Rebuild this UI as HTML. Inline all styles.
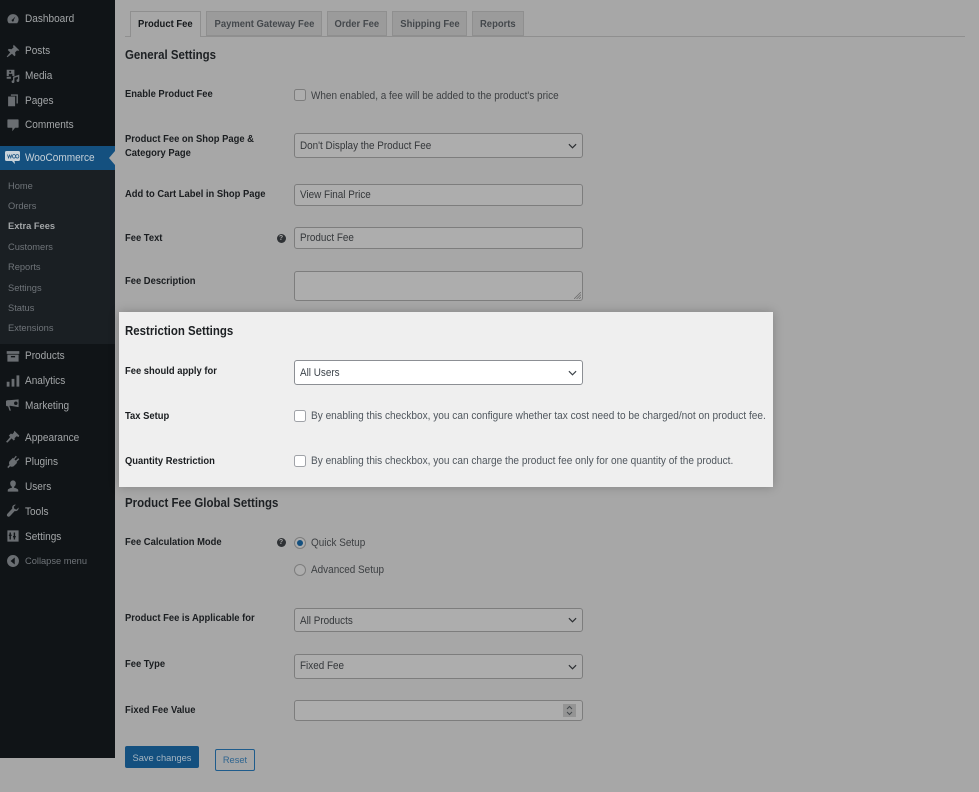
<!DOCTYPE html>
<html><head><meta charset="utf-8"><title>Product Fee</title>
<style>
html,body{margin:0;padding:0;background:#a7a7a7}
body{width:979px;height:792px;overflow:hidden;position:relative;font-family:"Liberation Sans",sans-serif;color:#1a1d20}
#w{position:absolute;left:0;top:0;width:979px;height:792px;background:#a7a7a7;filter:blur(.35px)}
.a{position:absolute;white-space:nowrap}
.side{position:absolute;left:0;top:0;width:115px;height:758px;background:#101417}
.sub{position:absolute;left:0;top:170px;width:115px;height:174px;background:#1a1f23}
.woo{position:absolute;left:0;top:146px;width:115px;height:24px;background:#14507f}
.m{position:absolute;left:25px;font-size:11.3px;line-height:14px;color:#a3a6a8;white-space:nowrap;transform:scaleX(.89);transform-origin:0 0}
.s{position:absolute;left:8px;font-size:9.3px;line-height:12px;color:#6f7479;white-space:nowrap}
.i{position:absolute;left:6px;width:14px;height:14px;fill:#6a6e72}
.t{position:absolute;top:11px;height:25px;box-sizing:border-box;border:1px solid #8f8f8f;background:#9b9b9b;font-size:10.5px;font-weight:bold;line-height:24px;text-align:center;color:#44484c;white-space:nowrap}
.t span{display:inline-block;transform:scaleX(.9);transform-origin:50% 50%}
.l{position:absolute;left:125px;font-size:10.5px;font-weight:bold;line-height:13.5px;white-space:nowrap;color:#1a1d20;transform:scaleX(.895);transform-origin:0 0}
.h{position:absolute;left:125px;font-size:12.8px;font-weight:bold;line-height:16px;white-space:nowrap;color:#1d2023;transform:scaleX(.895);transform-origin:0 0}
.f{position:absolute;left:294px;width:289px;box-sizing:border-box;border:1px solid #7d7d7d;border-radius:3px;background:#adadad;font-size:11px;line-height:21px;padding-left:5px;color:#34373a;white-space:nowrap}
.f span{display:inline-block;transform:scaleX(.9);transform-origin:0 50%}
.f svg{position:absolute;right:5px;top:50%;margin-top:-3px}
.c{position:absolute;left:294px;width:12px;height:12px;box-sizing:border-box;border:1px solid #7d7d7d;border-radius:2.5px;background:#adadad}
.d{position:absolute;left:311px;font-size:11px;line-height:14px;color:#3c3f42;white-space:nowrap;transform:scaleX(.905);transform-origin:0 0}
.q{position:absolute;left:276.5px;width:9px;height:9px;border-radius:50%;background:#2f3235;color:#a7a7a7;font-size:7px;font-weight:bold;line-height:9px;text-align:center}
.panel{position:absolute;left:119px;top:312px;width:654px;height:175px;background:#efefef;box-shadow:0 0 10px rgba(0,0,0,.22)}
</style></head><body><div id="w">

<div class="side"></div>
<div class="sub"></div>
<div class="woo"></div>
<svg class="a" style="left:109px;top:151px" width="6" height="14"><path d="M6 0L0 7l6 7z" fill="#a7a7a7"/></svg>

<svg class="i" style="top:12px" viewBox="0 0 20 20"><path d="M10 3a8 8 0 0 0-8 8c0 2 .7 3.700 2 5h12a8 8 0 0 0 2-5 8 8 0 0 0-8-8zm3.500 3.500L11 11.500a1.500 1.500 0 1 1-1.500-.9z" fill-rule="evenodd"/></svg>
<svg class="i" style="top:44px" viewBox="0 0 20 20"><path d="M11 1l8 8-2 1-1-1-3 3 .5 4-1.500 1.500-3.500-3.500L2 19l-1-1 5-6-3.500-3.500L4 7l4 .5 3-3-1-1z"/></svg>
<svg class="i" style="top:69px" viewBox="0 0 20 20"><path d="M1 1h11v9H9V7H4v3H1zm5 1.500a1.500 1.500 0 1 0 0 3 1.500 1.500 0 0 0 0-3zM1 11h6v3H1zM10 11l9-3v8.500a2 2 0 1 1-2-2V11l-5 1.500V18a2 2 0 1 1-2-2z" fill-rule="evenodd"/></svg>
<svg class="i" style="top:93px" viewBox="0 0 20 20"><path d="M7 2h10v13h-2V4H7zM3 5h10v14H3z"/></svg>
<svg class="i" style="top:118px" viewBox="0 0 20 20"><path d="M3 2h14a1 1 0 0 1 1 1v10a1 1 0 0 1-1 1h-4l-4 5v-5H3a1 1 0 0 1-1-1V3a1 1 0 0 1 1-1z"/></svg>
<svg class="a" style="left:5px;top:151px" width="15" height="13" viewBox="0 0 15 13"><path d="M1.500 0h12A1.500 1.500 0 0 1 15 1.500v7a1.500 1.500 0 0 1-1.500 1.500H9.500l.5 3-3-3H1.500A1.500 1.500 0 0 1 0 8.500v-7A1.500 1.500 0 0 1 1.500 0z" fill="#c9d3da"/><path d="M2.500 3.500l1 3.500 1.200-3 1.100 3 1-3.500M9 3.500a1.600 1.800 0 1 0 .01 0M12.300 3.500a1.600 1.800 0 1 0 .01 0" fill="none" stroke="#14507f" stroke-width=".7"/></svg>
<svg class="i" style="top:349px" viewBox="0 0 20 20"><path d="M1 3h18v4H1zM2 8h16v10H2zm5 2v2h6v-2z" fill-rule="evenodd"/></svg>
<svg class="i" style="top:374px" viewBox="0 0 20 20"><path d="M1 11h4v7H1zM8 7h4v11H8zM15 2h4v16h-4z"/></svg>
<svg class="i" style="top:398px" viewBox="0 0 20 20"><path d="M18 2v11L6 11H5v1l2 6H5l-2-6a4.500 4.500 0 0 1 0-9h3zM14 5a2.500 2.500 0 0 0 0 5 2.500 2.500 0 0 0 0-5z" fill-rule="evenodd"/></svg>
<svg class="i" style="top:430px" viewBox="0 0 20 20"><path d="M12 1l7 7-1 2-3-1-3 3 1 1-2 2-3-3-6 6-2-1 6-7-2-2 3-3 2 1 2-2z"/></svg>
<svg class="i" style="top:455px" viewBox="0 0 20 20"><path d="M14 1l1.500 1.500L12 6l2 2 3.500-3.500L19 6l-4 4 1 1-5 5c-2 1-4 1-5 0l-3 3-1-2 3-3c-1-1-1-3 0-5l5-5 1 1z"/></svg>
<svg class="i" style="top:479px" viewBox="0 0 20 20"><path d="M10 2a4 4 0 0 1 4 4.500c0 2-1 4-2.500 4.500v1.500c3 .5 6 2 6 3.500v2H2.500v-2c0-1.500 3-3 6-3.500V11C7 10.500 6 8.500 6 6.500A4 4 0 0 1 10 2z"/></svg>
<svg class="i" style="top:504px" viewBox="0 0 20 20"><path d="M18 5l-3 3-3-1-1-3 3-3c-3-.5-6 2-5 5.500L2 14c-1.500 1.500-.5 4 1 4 1 .5 2 0 3-1l6.500-7c3 1 6-2 5.500-5z"/></svg>
<svg class="i" style="top:529px" viewBox="0 0 20 20"><path d="M2 2h16v16H2zm3 3v3H4v2h1v5h2v-5h1V8H7V5zm6 0v5h-1v2h1v3h2v-3h1v-2h-1V5z" fill-rule="evenodd"/></svg>
<svg class="i" style="top:554px" viewBox="0 0 20 20"><path d="M10 1.500a8.500 8.500 0 1 0 0 17 8.500 8.500 0 0 0 0-17zM12.500 5v10l-6-5z" fill-rule="evenodd"/></svg>

<div class="m" style="top:11.5px">Dashboard</div>
<div class="m" style="top:44px">Posts</div>
<div class="m" style="top:69px">Media</div>
<div class="m" style="top:93.5px">Pages</div>
<div class="m" style="top:118px">Comments</div>
<div class="m" style="top:151px;color:#c5d0d8">WooCommerce</div>
<div class="s" style="top:180px">Home</div>
<div class="s" style="top:200px">Orders</div>
<div class="s" style="top:220px;font-weight:bold;color:#a3a6a8">Extra Fees</div>
<div class="s" style="top:240.5px">Customers</div>
<div class="s" style="top:261px">Reports</div>
<div class="s" style="top:281.5px">Settings</div>
<div class="s" style="top:302px">Status</div>
<div class="s" style="top:322px">Extensions</div>
<div class="m" style="top:349px">Products</div>
<div class="m" style="top:374px">Analytics</div>
<div class="m" style="top:398.5px">Marketing</div>
<div class="m" style="top:430.5px">Appearance</div>
<div class="m" style="top:455px">Plugins</div>
<div class="m" style="top:479.5px">Users</div>
<div class="m" style="top:504.5px">Tools</div>
<div class="m" style="top:529.5px">Settings</div>
<div class="m" style="top:554px;font-size:9.3px;color:#6f7479;transform:none">Collapse menu</div>

<div class="a" style="left:125px;top:36px;width:840px;height:1px;background:#8f8f8f"></div>
<div class="t" style="left:130px;width:71px;height:26px;background:#a7a7a7;border-bottom:0;color:#15181b"><span>Product Fee</span></div>
<div class="t" style="left:206px;width:116px"><span>Payment Gateway Fee</span></div>
<div class="t" style="left:327px;width:60px"><span>Order Fee</span></div>
<div class="t" style="left:392px;width:75px"><span>Shipping Fee</span></div>
<div class="t" style="left:472px;width:52px"><span>Reports</span></div>

<div class="h" style="top:47px">General Settings</div>
<div class="l" style="top:88px">Enable Product Fee</div>
<div class="c" style="top:89px"></div>
<div class="d" style="top:88.5px">When enabled, a fee will be added to the product's price</div>
<div class="l" style="top:133px">Product Fee on Shop Page &amp;<br>Category Page</div>
<div class="f" style="top:133px;height:25px;line-height:24px"><span>Don't Display the Product Fee</span><svg width="9" height="6" viewBox="0 0 10 6"><path d="M1 1l4 4 4-4" fill="none" stroke="#2b2e31" stroke-width="1.300"/></svg></div>
<div class="l" style="top:188px">Add to Cart Label in Shop Page</div>
<div class="f" style="top:184px;height:22px"><span>View Final Price</span></div>
<div class="l" style="top:231.5px">Fee Text</div>
<div class="q" style="top:234px">?</div>
<div class="f" style="top:227px;height:22px"><span>Product Fee</span></div>
<div class="l" style="top:274.5px">Fee Description</div>
<div class="f" style="top:271px;height:30px"><svg style="right:1px;top:auto;bottom:1px;margin:0" width="7" height="7" viewBox="0 0 7 7"><path d="M7 0L0 7M7 2.500L2.500 7M7 5L5 7" stroke="#6f6f6f" stroke-width=".8"/></svg></div>

<div class="panel"></div>
<div class="h" style="top:323px">Restriction Settings</div>
<div class="l" style="top:364.5px">Fee should apply for</div>
<div class="f" style="top:360px;height:25px;line-height:24px;background:#fff;border-color:#8c8f94;color:#3c434a"><span>All Users</span><svg width="9" height="6" viewBox="0 0 10 6"><path d="M1 1l4 4 4-4" fill="none" stroke="#3c434a" stroke-width="1.300"/></svg></div>
<div class="l" style="top:409.5px">Tax Setup</div>
<div class="c" style="top:410px;background:#fff;border-color:#a0a3a8"></div>
<div class="d" style="top:409px;color:#50575e;transform:scaleX(.917)">By enabling this checkbox, you can configure whether tax cost need to be charged/not on product fee.</div>
<div class="l" style="top:454.5px">Quantity Restriction</div>
<div class="c" style="top:454.5px;background:#fff;border-color:#a0a3a8"></div>
<div class="d" style="top:454px;color:#50575e;transform:scaleX(.917)">By enabling this checkbox, you can charge the product fee only for one quantity of the product.</div>

<div class="h" style="top:495px">Product Fee Global Settings</div>
<div class="l" style="top:536px">Fee Calculation Mode</div>
<div class="q" style="top:538px">?</div>
<div class="a" style="left:294px;top:537px;width:12px;height:12px;box-sizing:border-box;border:1px solid #7d7d7d;border-radius:50%;background:#adadad"></div>
<div class="a" style="left:297px;top:540px;width:6px;height:6px;border-radius:50%;background:#14507f"></div>
<div class="d" style="top:536px">Quick Setup</div>
<div class="a" style="left:294px;top:563.5px;width:12px;height:12px;box-sizing:border-box;border:1px solid #7d7d7d;border-radius:50%;background:#adadad"></div>
<div class="d" style="top:563px">Advanced Setup</div>

<div class="l" style="top:611.5px">Product Fee is Applicable for</div>
<div class="f" style="top:608px;height:24px;line-height:24px"><span>All Products</span><svg width="9" height="6" viewBox="0 0 10 6"><path d="M1 1l4 4 4-4" fill="none" stroke="#2b2e31" stroke-width="1.300"/></svg></div>
<div class="l" style="top:658px">Fee Type</div>
<div class="f" style="top:654px;height:25px;line-height:23px"><span>Fixed Fee</span><svg width="9" height="6" viewBox="0 0 10 6"><path d="M1 1l4 4 4-4" fill="none" stroke="#2b2e31" stroke-width="1.300"/></svg></div>
<div class="l" style="top:703.5px">Fixed Fee Value</div>
<div class="f" style="top:700px;height:21px"></div>
<svg class="a" style="left:563px;top:704px" width="13" height="13" viewBox="0 0 13 13"><rect width="13" height="13" fill="#949494"/><path d="M4 5l2.500-2.500L9 5M4 8l2.500 2.500L9 8" fill="none" stroke="#44484c" stroke-width="1"/></svg>

<div class="a" style="left:125px;top:746px;width:74px;height:22px;background:#14507f;border-radius:2px;color:#a7b6c2;font-size:9.3px;line-height:24px;text-align:center">Save changes</div>
<div class="a" style="left:215px;top:749px;width:40px;height:22px;box-sizing:border-box;border:1px solid #1f5c8c;border-radius:2px;color:#2f6590;font-size:9.3px;line-height:21px;text-align:center">Reset</div>
</div></body></html>
